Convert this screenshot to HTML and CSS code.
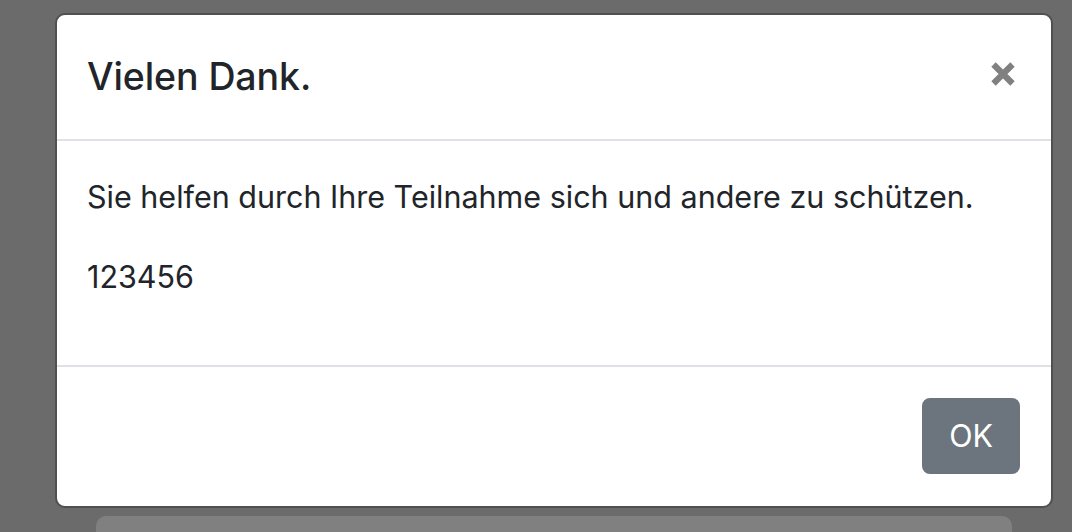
FILE: index.html
```html
<!DOCTYPE html>
<html lang="de">
<head>
<meta charset="utf-8">
<title>Vielen Dank.</title>
<link rel="stylesheet" href="styles.css">
</head>
<body>
<div class="modal">
  <div class="modal-header">
    <h5 class="modal-title">Vielen Dank.</h5>
    <button class="close" type="button" aria-label="Close">
      <svg width="26" height="26" viewBox="0 0 26 26"><path d="M3.5 3.5 L22.5 22.5 M22.5 3.5 L3.5 22.5" stroke="#808080" stroke-width="6.2" stroke-linecap="butt" fill="none"/></svg>
    </button>
  </div>
  <div class="modal-body">
    <p>Sie helfen durch Ihre Teilnahme sich und andere zu schützen.</p>
    <p>123456</p>
  </div>
  <div class="modal-footer">
    <button class="btn" type="button">OK</button>
  </div>
</div>
<div class="under"></div>
</body>
</html>
```
FILE: styles.css
```css
html, body {
  margin: 0;
  padding: 0;
  height: 100%;
  overflow: hidden;
}
body {
  background: #6b6b6b;
  font-family: Inter, "Liberation Sans", sans-serif;
  color: #212529;
}
.modal {
  margin: 13px 0 0 55px;
  width: 998px;
  box-sizing: border-box;
  background: #fff;
  border: 2px solid #505050;
  border-radius: 10px;
}
.modal-header {
  display: flex;
  align-items: center;
  justify-content: space-between;
  padding: 32px 32px 32px 30px;
  border-bottom: 2px solid #dee2e6;
}
.modal-title {
  margin: 0;
  font-size: 37.5px;
  font-weight: 500;
  line-height: 60px;
  letter-spacing: -0.1px;
}
.close {
  border: 0;
  background: none;
  padding: 0;
  margin: 0 3px 6px 0;
  width: 26px;
  height: 26px;
  display: flex;
}
.modal-body {
  padding: 32px 32px 32px 30px;
}
.modal-body p {
  margin: 0 0 32px;
  font-size: 30.5px;
  line-height: 48px;
}
.modal-footer {
  display: flex;
  justify-content: flex-end;
  padding: 24px;
  border-top: 2px solid #dee2e6;
}
.btn {
  margin: 7px 7px 8px;
  height: 76px;
  padding: 0 27px;
  border: 0;
  border-radius: 8px;
  background: #6c757d;
  color: #fff;
  font-family: Inter, "Liberation Sans", sans-serif;
  font-size: 30.5px;
  line-height: 48px;
}
.under {
  margin: 8px 0 0 96px;
  width: 916px;
  height: 40px;
  background: #808080;
  border-radius: 10px;
}
```
